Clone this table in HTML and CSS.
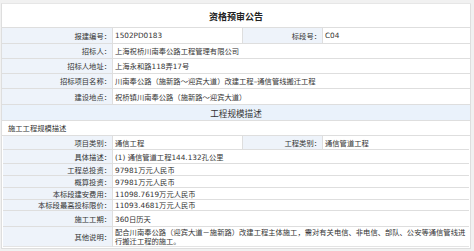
FILE: index.html
```html
<!DOCTYPE html>
<html lang="zh-CN">
<head>
<meta charset="utf-8">
<title>资格预审公告</title>
<link rel="stylesheet" href="styles.css">
</head>
<body>
<div class="sheet">
  <div class="grid top">
    <div class="cell title span4">资格预审公告</div>

    <div class="cell label">报建编号：</div>
    <div class="cell value">1502PD0183</div>
    <div class="cell label">标段号：</div>
    <div class="cell value">C04</div>

    <div class="cell label">招标人：</div>
    <div class="cell value span3">上海祝桥川南奉公路工程管理有限公司</div>

    <div class="cell label">招标人地址：</div>
    <div class="cell value span3">上海永和路118弄17号</div>

    <div class="cell label">招标项目名称：</div>
    <div class="cell value span3">川南奉公路（施新路～迎宾大道）改建工程–通信管线搬迁工程</div>

    <div class="cell label">建设地点：</div>
    <div class="cell value span3">祝桥镇川南奉公路（施新路～迎宾大道）</div>

    <div class="cell head span4">工程规模描述</div>

    <div class="cell subhead span4">施工工程规模描述</div>

    <div class="cell section span4">
      <div class="grid inner">
        <div class="cell label">项目类别：</div>
        <div class="cell value">通信工程</div>
        <div class="cell label">工程类别：</div>
        <div class="cell value">通信管道工程</div>

        <div class="cell label">具体描述：</div>
        <div class="cell value span3">(1) 通信管道工程144.132孔公里</div>

        <div class="cell label">工程总投资：</div>
        <div class="cell value span3">97981万元人民币</div>

        <div class="cell label">概算投资：</div>
        <div class="cell value span3">97981万元人民币</div>

        <div class="cell label">本标段建安费用：</div>
        <div class="cell value span3">11098.7619万元人民币</div>

        <div class="cell label">本标段最高投标限价：</div>
        <div class="cell value span3">11093.4681万元人民币</div>

        <div class="cell label">施工工期：</div>
        <div class="cell value span3">360日历天</div>

        <div class="cell label">其他说明：</div>
        <div class="cell value span3 multi">配合川南奉公路（迎宾大道－施新路）改建工程主体施工，需对有关电信、非电信、部队、公安等通信管线进<br>行搬迁工程的施工。</div>
      </div>
    </div>
  </div>
</div>
</body>
</html>
```

FILE: styles.css
```css
* {
  box-sizing: border-box;
}

html, body {
  margin: 0;
  padding: 0;
  background: #f1f1f1;
}

body {
  font-family: "DejaVu Sans", "Noto Sans CJK SC", sans-serif;
  font-size: 7.3px;
  color: #333;
  width: 474px;
  height: 251px;
  overflow: hidden;
}

.sheet {
  margin: 3px 0 0 1px;
  width: 470px;
  background: #fff;
}

.grid {
  display: grid;
}

.top {
  grid-template-columns: 111px 130px 80px 1fr;
  grid-template-rows: 24px 16px 15px 15px 15px 16px 16px 15px auto;
  border-left: 1px solid #dedede;
  border-top: 1px solid #e6e6e6;
}

.inner {
  grid-template-columns: 110px 130px 80px 1fr;
  grid-template-rows: 14px 14px 12px 12px 12px 11px 16px 20px;
}

.cell {
  display: flex;
  align-items: center;
  border-right: 1px solid #dedede;
  border-bottom: 1px solid #dedede;
  white-space: nowrap;
  min-width: 0;
}

.span3 {
  grid-column: span 3;
}

.span4 {
  grid-column: span 4;
}

.title {
  justify-content: center;
  font-size: 9px;
  font-weight: bold;
  color: #222;
  padding-top: 1px;
}

.label {
  justify-content: flex-end;
  background: #eef3fa;
  padding-right: 1px;
}

.value {
  padding-left: 2px;
  background: #fff;
}

.head {
  justify-content: center;
  background: #eaf2fb;
  font-size: 8.6px;
}

.subhead {
  padding-left: 6px;
  background: #fff;
}

.section {
  display: block;
  padding: 0 1px 1px 1px;
  background: #fff;
}

.inner .cell:nth-child(4n+4) {
  border-right: none;
}

.inner .value.span3 {
  border-right: none;
}

.inner .cell:nth-last-child(-n+2) {
  border-bottom: 1px solid #e4e4e4;
}

.multi {
  white-space: normal;
  line-height: 9.5px;
  padding-top: 1px;
}
```
